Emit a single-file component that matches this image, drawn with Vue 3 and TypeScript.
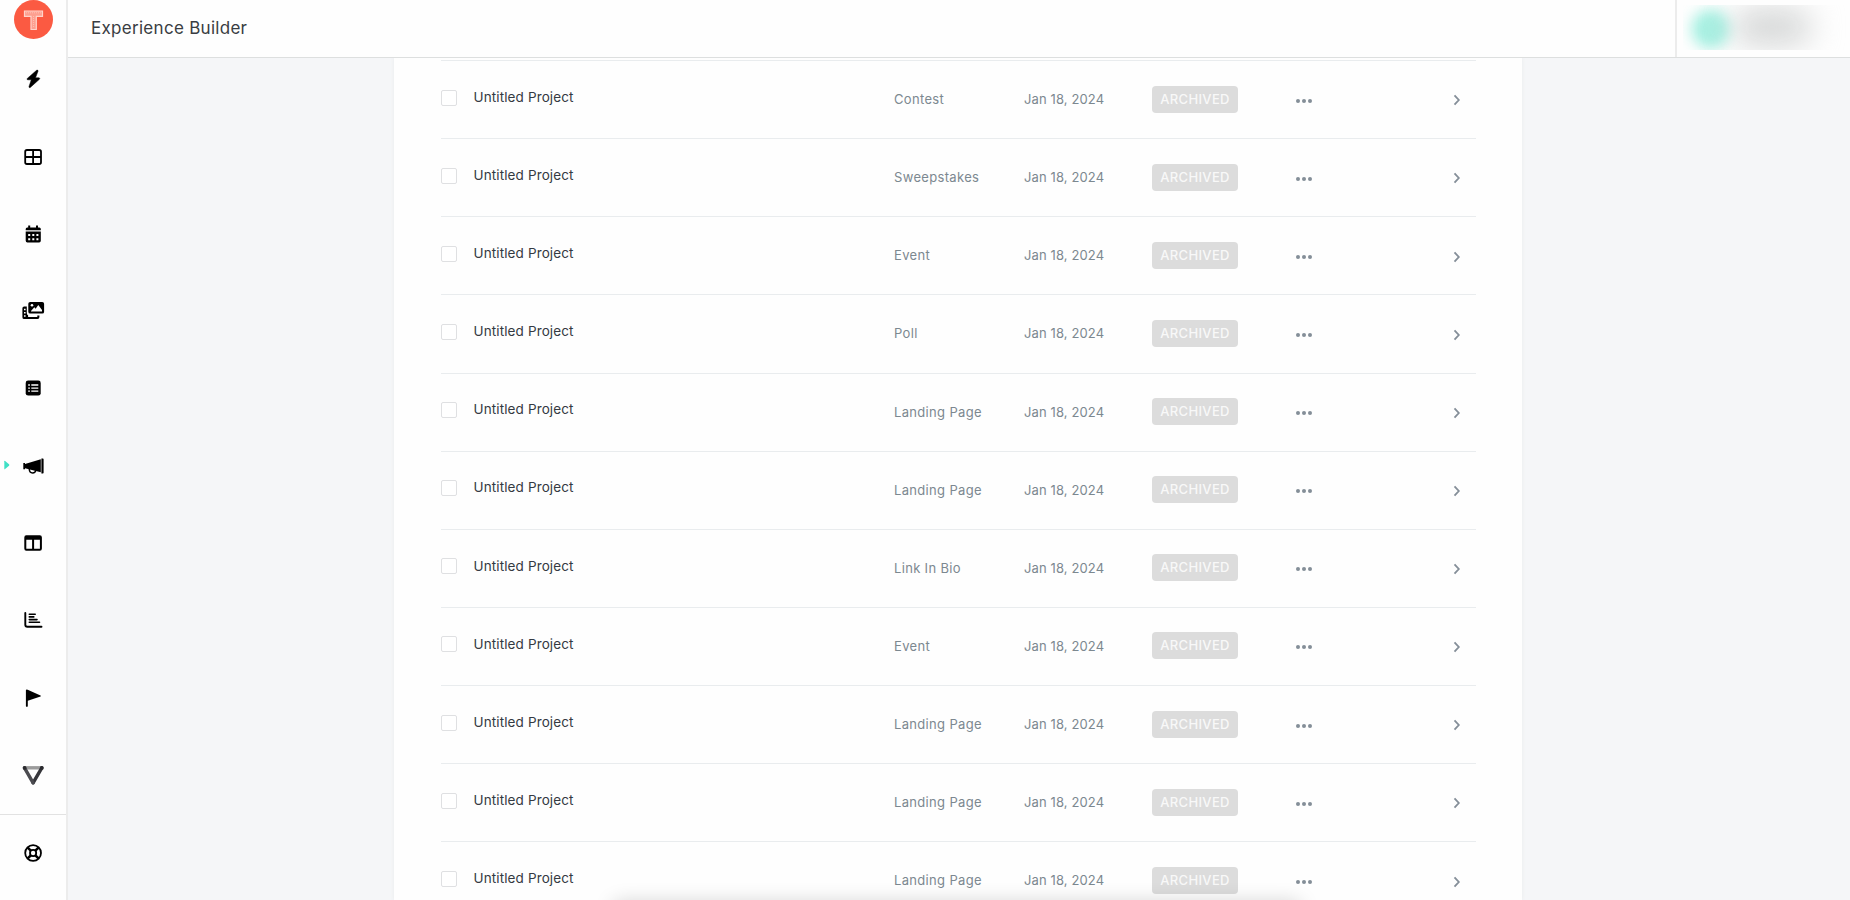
<script setup lang="ts">
interface Row {
  name: string
  kind: string
  date: string
  status: string
}

const kinds: string[] = [
  'Contest', 'Sweepstakes', 'Event', 'Poll', 'Landing Page', 'Landing Page',
  'Link In Bio', 'Event', 'Landing Page', 'Landing Page', 'Landing Page',
]

const rows: Row[] = kinds.map((kind) => ({
  name: 'Untitled Project',
  kind,
  date: 'Jan 18, 2024',
  status: 'ARCHIVED',
}))
</script>

<template>
  <div class="app">
    <aside class="sidebar">
      <div class="logo">
        <svg width="39" height="39" viewBox="0 0 39 39">
          <circle cx="19.5" cy="19.5" r="19.5" fill="#fb5a42" />
          <path d="M10.5 11H28.5V16.3H22.3V29.5H17V16.3H10.5Z" fill="#fd9f8f" stroke="#ffd3ca" stroke-width="1.2" />
          <path d="M12 12.8H27M19.6 16V28" stroke="#fec0b4" stroke-width="1" stroke-dasharray="1 1" />
        </svg>
      </div>
      <nav class="nav">
        <a class="item">
          <svg class="icon" viewBox="0 0 24 24"><path d="M15.6 3.3 6.3 11.4c-.5.5-.2 1.4.5 1.4h3.5L8 19.5c-.3.9.6 1.5 1.3.9l9.1-8.1c.6-.5.3-1.5-.4-1.5h-3.5l2.5-6.5c.3-.9-.7-1.6-1.4-1Z" stroke="#000" stroke-width=".5" /></svg>
        </a>
        <a class="item">
          <svg class="icon" viewBox="0 0 24 24"><path d="M6 5H18.2Q20 5 20 6.8V17.2Q20 19 18.2 19H6Q4.2 19 4.2 17.2V6.8Q4.2 5 6 5ZM12.1 5V19M4.2 12H20" fill="none" stroke="#000" stroke-width="1.8" /></svg>
        </a>
        <a class="item">
          <svg class="icon" viewBox="0 0 24 24">
            <path d="M7.2 3.5h2V5.5h5.8v-2h2v2h1.3q1.5 0 1.5 1.5v1.2H4.7V7q0-1.5 1.5-1.5h1ZM4.7 9.6h15.1v9.2q0 1.7-1.7 1.7H6.4q-1.7 0-1.7-1.7Z" />
            <path d="M7.2 12h2v2h-2ZM11.3 12h2v2h-2ZM15.4 12h2v2h-2ZM7.2 16.2h2v2h-2ZM11.3 16.2h2v2h-2ZM15.4 16.2h2v2h-2Z" fill="#fff" />
          </svg>
        </a>
        <a class="item">
          <svg class="icon" viewBox="0 0 24 24">
            <path d="M9.2 2.9h12q1.9 0 1.9 1.9v7.9q0 1.9-1.9 1.9h-12q-1.9 0-1.9-1.9V4.8q0-1.9 1.9-1.9ZM10 12.4h11V11l-3.7-5-2.7 3.7-1.3-1.4-3.3 3.6Z" fill-rule="evenodd" />
            <circle cx="11" cy="6.2" r="1.3" fill="#fff" />
            <path d="M5.8 7.4H3.2q-1.8 0-1.8 1.8v9q0 1.9 1.8 1.9h13.4q1.8 0 1.8-2v-1.7h-2.1v1.5H7.1V16.2q-1.3-.7-1.3-2.3Z" />
            <path d="M3 9.7h1.6v1.5H3ZM3 13h1.6v1.5H3ZM3 16.3h1.6v1.5H3Z" fill="#fff" />
          </svg>
        </a>
        <a class="item">
          <svg class="icon" viewBox="0 0 24 24">
            <rect x="4.7" y="4.6" width="15" height="15" rx="2.4" />
            <path d="M7.2 9h1.7M10.3 9h7M7.2 12.1h1.7M10.3 12.1h7M7.2 15.2h1.7M10.3 15.2h7" stroke="#fff" stroke-width="1.3" />
          </svg>
        </a>
        <a class="item active">
          <svg class="marker" viewBox="0 0 6 10"><path d="M.3 1.3v7.4q0 1 .8.4L5 5.7Q5.8 5 5 4.3L1.1.9Q.3.3.3 1.3Z" fill="#3fe0c5" /></svg>
          <svg class="icon" viewBox="0 0 24 24">
            <path d="M20.4 4.5h1.4q.8 0 .8.8v13.4q0 .7-.8.7h-1.4ZM19.8 5.2V18.3L4 14.3v.9H2.3V9.1H4v.8Z" />
            <path d="M8.3 15q.1 3.9 3.3 3.9 2.9 0 3.1-2.7" fill="none" stroke="#000" stroke-width="1.5" />
          </svg>
        </a>
        <a class="item">
          <svg class="icon" viewBox="0 0 24 24">
            <path d="M5.3 4.3H18.8Q20.9 4.3 20.9 6.4V17.6Q20.9 19.8 18.8 19.8H5.3Q3.3 19.8 3.3 17.6V6.4Q3.3 4.3 5.3 4.3ZM5.3 8.7V17.8H11.1V8.7ZM13.1 8.7V17.8H18.9V8.7Z" fill-rule="evenodd" />
          </svg>
        </a>
        <a class="item">
          <svg class="icon" viewBox="0 0 24 24">
            <path d="M4.3 5V16.7Q4.3 18.7 6.3 18.7H20.5" fill="none" stroke="#000" stroke-width="1.9" stroke-linecap="round" />
            <path d="M8.3 6.3H14.2M8.3 8.9H12.8M8.3 11.6H16M8.3 14.3H18.5" stroke="#000" stroke-width="1.6" stroke-linecap="round" />
          </svg>
        </a>
        <a class="item">
          <svg class="icon" viewBox="0 0 24 24"><path d="M4.9 4.3q0-.9.9-.9.5 0 .9.3L19.5 9.4q.9.5 0 1l-12.7 4.4v5.1q0 .9-.95.9t-.95-.9Z" /></svg>
        </a>
        <a class="item">
          <svg class="icon" viewBox="0 0 24 24">
            <path d="M3.5 4.8H20.8" stroke="#9b9b9b" stroke-width="3.4" />
            <path d="M20.8 4.8 12.1 19.8" stroke="#35353a" stroke-width="3.4" stroke-linecap="round" />
            <path d="M3.5 4.8 12.1 19.8" stroke="#4b4b50" stroke-width="3.4" stroke-linecap="round" />
            <circle cx="3.6" cy="4.9" r="1.9" fill="#2b2b2f" /><circle cx="20.8" cy="4.9" r="1.9" fill="#2b2b2f" />
          </svg>
        </a>
      </nav>
      <div class="help">
        <svg class="icon" viewBox="0 0 24 24">
          <g fill="none" stroke="#000" stroke-width="1.8">
            <circle cx="12.1" cy="12" r="7.9" />
            <circle cx="12.1" cy="12" r="3.1" />
            <path d="M6.7 6.6 9.8 9.7M17.5 6.6 14.4 9.7M6.7 17.4 9.8 14.3M17.5 17.4 14.4 14.3" stroke-width="2.6" />
          </g>
        </svg>
      </div>
    </aside>

    <div class="main">
      <header class="topbar">
        <h1 class="title">Experience Builder</h1>
        <div class="account">
          <div class="blurbox">
            <span class="avatar"></span>
            <span class="username"></span>
          </div>
        </div>
      </header>
      <main class="content">
        <section class="panel">
          <div v-for="(row, i) in rows" :key="i" class="row">
            <span class="check"></span>
            <span class="name">{{ row.name }}</span>
            <span class="kind">{{ row.kind }}</span>
            <span class="date">{{ row.date }}</span>
            <span class="status"><span class="badge">{{ row.status }}</span></span>
            <svg class="dots" viewBox="0 0 18 6"><circle cx="3" cy="3" r="2" /><circle cx="9" cy="3" r="2" /><circle cx="15" cy="3" r="2" /></svg>
            <svg class="chevron" viewBox="0 0 8 12"><path d="M1.5 1.3 5.8 6 1.5 10.7" /></svg>
          </div>
        </section>
        <div class="shade"></div>
      </main>
    </div>
  </div>
</template>

<style>
body {
  overflow: hidden;
}
</style>

<style scoped>
.app {
  display: flex;
  width: 1850px;
  height: 900px;
  overflow: hidden;
  background: #fefefe;
  font-family: Inter, "Liberation Sans", sans-serif;
}
.sidebar {
  display: flex;
  flex-direction: column;
  flex: none;
  box-sizing: border-box;
  width: 68px;
  border-right: 2px solid #ececec;
}
.logo {
  height: 40.6px;
  padding-left: 14px;
}
.logo svg {
  display: block;
}
.nav {
  height: 773px;
}
.item {
  position: relative;
  display: flex;
  align-items: center;
  justify-content: center;
  height: 77.3px;
}
.icon {
  width: 24px;
  height: 24px;
}
.marker {
  position: absolute;
  left: 4px;
  top: 33px;
  width: 6px;
  height: 10px;
}
.help {
  display: flex;
  align-items: center;
  justify-content: center;
  height: 76px;
  border-top: 1px solid #e2e2e2;
}
.main {
  flex: 1;
  display: flex;
  flex-direction: column;
}
.topbar {
  display: flex;
  justify-content: space-between;
  flex: none;
  box-sizing: border-box;
  height: 58px;
  border-bottom: 1px solid #dddfdf;
}
.title {
  margin: 0;
  padding-left: 23px;
  font-size: 17px;
  line-height: 57px;
  font-weight: 400;
  letter-spacing: 0.29px;
  color: #393d42;
}
.account {
  box-sizing: border-box;
  width: 175px;
  padding: 5px 0 0 6px;
  border-left: 2px solid #ececec;
}
.blurbox {
  display: flex;
  align-items: center;
  width: 163px;
  height: 45px;
  overflow: hidden;
}
.avatar {
  flex: none;
  width: 34px;
  height: 34px;
  margin: 2px 0 0 11px;
  border-radius: 50%;
  background: #a8f0e2;
  box-shadow: 0 0 10px 3px #b8f3e8;
  filter: blur(6px);
}
.username {
  flex: none;
  width: 76px;
  height: 32px;
  margin: -2px 0 0 6px;
  background: #cfd1d1;
  border-radius: 14px;
  filter: blur(16px);
}
.content {
  position: relative;
  flex: 1;
  min-height: 0;
  overflow: hidden;
  background: #f5f6f8;
}
.panel {
  box-sizing: border-box;
  width: 1128px;
  height: 842px;
  margin-left: 326px;
  padding: 2px 46px 0 47px;
  overflow: hidden;
  background: #fefefe;
  box-shadow: 0 0 4px #e9ebec;
}
.row {
  display: grid;
  grid-template-columns: 32.5px 420.5px 130px 128px 142.5px 158.5px 1fr;
  align-items: center;
  box-sizing: border-box;
  height: 78.14px;
  border-top: 1px solid #e9ecee;
  font-size: 13px;
  color: #7c8890;
}
.check {
  box-sizing: border-box;
  width: 16px;
  height: 16px;
  margin-top: -4px;
  border: 1px solid #dfe0e2;
  border-radius: 2px;
  background: #fff;
}
.name {
  margin-top: -5.5px;
  font-size: 13.5px;
  letter-spacing: 0.12px;
  color: #343a42;
}
.kind {
  margin-top: -1px;
  letter-spacing: 0.33px;
}
.date {
  margin-top: -1px;
  letter-spacing: 0.12px;
}
.badge {
  display: block;
  box-sizing: border-box;
  width: 86px;
  height: 27px;
  margin-top: -1px;
  border-radius: 4px;
  background: #dcdcdc;
  color: #f8f8f8;
  font-weight: 500;
  letter-spacing: 0.35px;
  line-height: 27px;
  text-align: center;
}
.dots {
  width: 18px;
  height: 6px;
  margin-top: 2px;
  fill: #848e98;
}
.chevron {
  width: 8px;
  height: 12px;
  margin-top: 1.5px;
  fill: none;
  stroke: #848e98;
  stroke-width: 1.8;
}
.shade {
  position: absolute;
  left: 544px;
  bottom: -20px;
  width: 690px;
  height: 18px;
  border-radius: 10px;
  box-shadow: 0 0 20px rgba(0, 0, 0, 0.18);
}
</style>
